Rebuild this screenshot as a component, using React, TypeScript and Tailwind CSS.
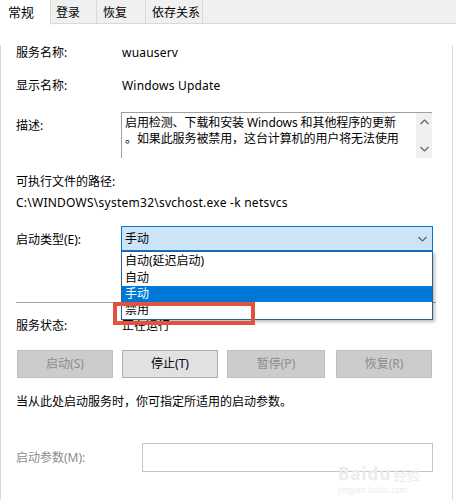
import React from "react";

const F = "font-[family-name:'Noto_Sans','Noto_Sans_CJK_SC',sans-serif]";

function Chevron({ up = false, className = "" }: { up?: boolean; className?: string }) {
  return (
    <svg width="9" height="6" viewBox="0 0 9 6" className={className}>
      <polyline
        points={up ? "0.5,5 4.5,1 8.5,5" : "0.5,1 4.5,5 8.5,1"}
        fill="none"
        stroke="currentColor"
        strokeWidth="1.2"
      />
    </svg>
  );
}

export default function App() {
  return (
    <div className={`${F} relative w-[456px] h-[500px] overflow-hidden bg-white text-[12px] text-black leading-[16px]`}>
      {/* Tab bar */}
      <div className="flex h-[24px] bg-[#f0f0f0] border-b border-[#d9d9d9]">
        <div className="w-[51px] h-[25px] bg-white border-r border-[#d9d9d9] pl-[8px] pt-[4px] text-[13px] z-10">常规</div>
        <div className="w-[46px] border-r border-[#d9d9d9] pl-[5px] pt-[5px] text-[12px]">登录</div>
        <div className="w-[49px] border-r border-[#d9d9d9] pl-[6px] pt-[5px] text-[12px]">恢复</div>
        <div className="w-[57px] border-r border-[#d9d9d9] pl-[6px] pt-[5px] text-[12px]">依存关系</div>
      </div>

      {/* Panel */}
      <div className="w-[453px] h-[476px] border-l border-r border-[#d9d9d9] pl-[15px]">
        <div className="flex mt-[21px] h-[16px]">
          <div className="w-[106px]">服务名称:</div>
          <div className="tracking-[0.2px]">wuauserv</div>
        </div>
        <div className="flex mt-[17px] h-[16px]">
          <div className="w-[106px]">显示名称:</div>
          <div className="tracking-[0.2px]">Windows Update</div>
        </div>
        <div className="flex mt-[18px] h-[46px]">
          <div className="w-[105px] pt-[6px]">描述:</div>
          <div className="flex w-[311px] h-[46px] border-t border-l border-[#a0a0a0]">
            <div className="flex-1 pl-[3px] pt-[2px] text-[12px] leading-[16px] tracking-[-0.1px]">
              <div>启用检测、下载和安装 Windows 和其他程序的更新</div>
              <div>。如果此服务被禁用，这台计算机的用户将无法使用</div>
            </div>
            <div className="w-[16px] bg-[#f0f0f0] flex flex-col items-center justify-between py-[6px] text-[#606060]">
              <Chevron up />
              <Chevron />
            </div>
          </div>
        </div>
        <div className="mt-[16px] h-[16px]">可执行文件的路径:</div>
        <div className="mt-[5px] h-[16px] tracking-[0.25px]">C:\WINDOWS\system32\svchost.exe -k netsvcs</div>

        <div className="flex mt-[15px] h-[25px]">
          <div className="w-[105px] pt-[6px]">启动类型(E):</div>
          <div className="flex items-center justify-between w-[312px] h-[25px] border border-[#0078d7] bg-[#cce4f7] pl-[3px] pr-[5px]">
            <span>手动</span>
            <Chevron className="text-[#606060]" />
          </div>
        </div>

        <div className="mt-[51px] h-px w-[420px] bg-[#a0a0a0]" />

        <div className="flex mt-[15px] h-[16px]">
          <div className="w-[106px]">服务状态:</div>
          <div>正在运行</div>
        </div>

        <div className="flex mt-[16px] h-[28px]">
          <div className="w-[96px] ml-[1px] flex items-center justify-center bg-[#cccccc] border border-[#bfbfbf] text-[#8c8c8c]">启动(S)</div>
          <div className="w-[96px] ml-[9px] flex items-center justify-center bg-[#e1e1e1] border border-[#adadad]">停止(T)</div>
          <div className="w-[98px] ml-[9px] flex items-center justify-center bg-[#cccccc] border border-[#bfbfbf] text-[#8c8c8c]">暂停(P)</div>
          <div className="w-[96px] ml-[11px] flex items-center justify-center bg-[#cccccc] border border-[#bfbfbf] text-[#8c8c8c]">恢复(R)</div>
        </div>

        <div className="mt-[16px] h-[16px]">当从此处启动服务时，你可指定所适用的启动参数。</div>

        <div className="flex mt-[33px] h-[29px]">
          <div className="w-[126px] pt-[7px] text-[#8c8c8c]">启动参数(M):</div>
          <div className="w-[291px] h-[29px] border border-[#c4c4c4] bg-white" />
        </div>
      </div>

      {/* Watermark */}
      <div className="absolute left-[338px] top-[466px] text-[#ececec] leading-none">
        <div className="flex items-end h-[16px]">
          <span className="text-[17px] font-bold tracking-[1px]">Baidu</span>
          <span className="text-[13px] ml-[2px]">经验</span>
        </div>
        <div className="text-[8px] leading-[10px] mt-[3px]">jingyan.baidu.com</div>
      </div>

      {/* Dropdown list */}
      <div className="absolute left-[121px] top-[251px] w-[312px] h-[69px] bg-white border border-[#2b5f95] shadow-[2px_2px_3px_rgba(0,0,0,0.25)] pt-[1px]">
        <div className="h-[16px] pl-[3px]">自动(延迟启动)</div>
        <div className="h-[17px] pl-[3px] pt-[1px]">自动</div>
        <div className="h-[16px] pl-[3px] bg-[#0078d7] text-white">手动</div>
        <div className="h-[16px] pl-[3px]">禁用</div>
      </div>

      {/* Red annotation box */}
      <div className="absolute left-[113px] top-[302px] w-[142px] h-[23px] border-[4px] border-[#e2523e]" />
    </div>
  );
}
